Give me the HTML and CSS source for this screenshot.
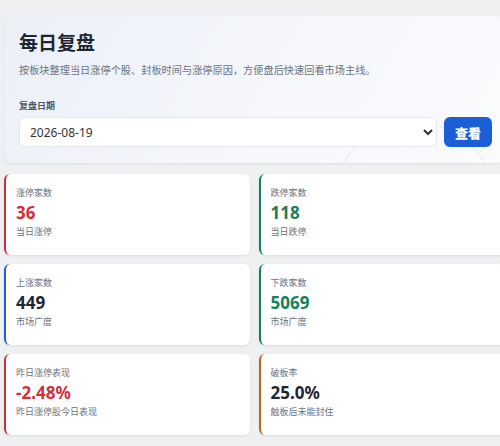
FILE: index.html
```html
<!DOCTYPE html>
<html lang="zh-CN">
<head>
    <meta charset="UTF-8">
    <meta name="viewport" content="width=device-width, initial-scale=1.0">
    <title>每日复盘</title>
    <link rel="stylesheet" href="styles.css">
</head>
<body>

    <div class="page">
        <section class="hero">
            <h1>每日复盘</h1>
            <p class="hero-desc">按板块整理当日涨停个股、封板时间与涨停原因，方便盘后快速回看市场主线。</p>

            <label class="field-label" for="date-select">复盘日期</label>
            <div class="query-row">
                <select id="date-select">
                    <option value="2026-08-19">2026-08-19</option>
                    <option value="2026-08-18">2026-08-18</option>
                    <option value="2026-08-17">2026-08-17</option>
                </select>
                <button class="query-btn" id="query-btn">查看</button>
            </div>
        </section>

        <div class="stats">
            <div class="stat-card red">
                <div class="stat-label">涨停家数</div>
                <div class="stat-value up">36</div>
                <div class="stat-note">当日涨停</div>
            </div>
            <div class="stat-card green">
                <div class="stat-label">跌停家数</div>
                <div class="stat-value down">118</div>
                <div class="stat-note">当日跌停</div>
            </div>
            <div class="stat-card blue">
                <div class="stat-label">上涨家数</div>
                <div class="stat-value">449</div>
                <div class="stat-note">市场广度</div>
            </div>
            <div class="stat-card green">
                <div class="stat-label">下跌家数</div>
                <div class="stat-value down">5069</div>
                <div class="stat-note">市场广度</div>
            </div>
            <div class="stat-card red">
                <div class="stat-label">昨日涨停表现</div>
                <div class="stat-value up">-2.48%</div>
                <div class="stat-note">昨日涨停股今日表现</div>
            </div>
            <div class="stat-card orange">
                <div class="stat-label">破板率</div>
                <div class="stat-value">25.0%</div>
                <div class="stat-note">触板后未能封住</div>
            </div>
        </div>
    </div>

</body>
</html>
```

FILE: styles.css
```css
html {
    overflow-y: scroll;
    overflow-x: hidden;
}
::-webkit-scrollbar { width: 2px; }
::-webkit-scrollbar-track { background: #dfe1e4; }
::-webkit-scrollbar-thumb { background: #c4c7cc; }

body {
    margin: 0;
    font-family: "Noto Sans", "Noto Sans CJK SC", sans-serif;
    background-color: #eef0f2;
    color: #1f2937;
}
.page {
    width: 500px;
    padding: 16px 0 20px 4px;
}

/* top panel */
.hero {
    position: relative;
    overflow: hidden;
    padding: 15px 12px 16px 15px;
    border-radius: 8px;
    background: linear-gradient(120deg, #ebeff7 0%, #f4f6fb 45%, #fafbfd 100%);
    box-shadow: 0 1px 3px rgba(0, 0, 0, 0.08);
}
.hero::after {
    content: "";
    position: absolute;
    left: 329px;
    top: 105px;
    width: 160px;
    height: 160px;
    border: 1px solid #e2e8f2;
    border-radius: 50%;
    pointer-events: none;
}
.hero h1 {
    margin: 0;
    font-size: 19px;
    line-height: 24px;
    font-weight: 700;
    color: #1f2633;
}
.hero-desc {
    margin: 7px 0 0;
    font-size: 10.2px;
    line-height: 16px;
    color: #6b7280;
}
.field-label {
    display: block;
    margin-top: 22px;
    font-size: 9px;
    line-height: 12px;
    font-weight: 700;
    color: #4b5563;
}
.query-row {
    position: relative;
    z-index: 1;
    display: flex;
    gap: 7px;
    margin-top: 5px;
}
select {
    flex: 1;
    height: 30px;
    padding: 0 6px;
    font-family: inherit;
    font-size: 12px;
    color: #333;
    background: #fff;
    border: 1px solid #e3e6ea;
    border-radius: 5px;
}
.query-btn {
    width: 48px;
    height: 30px;
    border: none;
    border-radius: 6px;
    background: #1a5fd6;
    color: #fff;
    font-family: inherit;
    font-size: 13px;
    font-weight: 900;
    cursor: pointer;
}

/* summary cards */
.stats {
    display: grid;
    grid-template-columns: 1fr 1fr;
    gap: 9px;
    margin-top: 11px;
}
.stat-card {
    height: 81px;
    box-sizing: border-box;
    padding: 12px 10px 0;
    background: #fff;
    border-left: 2px solid #ccc;
    border-radius: 6px;
    box-shadow: 0 1px 3px rgba(0, 0, 0, 0.08);
}
.stat-card.red { border-left-color: #d0303c; }
.stat-card.green { border-left-color: #17805a; }
.stat-card.blue { border-left-color: #1c5fd0; }
.stat-card.orange { border-left-color: #b8661c; }

.stat-label { font-size: 9px; line-height: 13px; color: #6b7280; }
.stat-value {
    margin-top: 4px;
    font-size: 17px;
    line-height: 20px;
    font-weight: 700;
    color: #1f2633;
}
.stat-value.up { color: #d0303c; }
.stat-value.down { color: #17805a; }
.stat-note { margin-top: 2px; font-size: 9px; line-height: 13px; color: #6b7280; }
```
